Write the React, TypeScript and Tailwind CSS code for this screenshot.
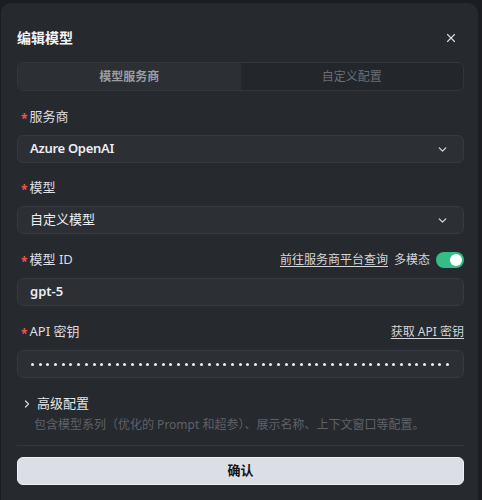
import { X, ChevronDown, ChevronRight } from "lucide-react";

const font = { fontFamily: '"Noto Sans", "Noto Sans CJK SC", sans-serif' };

const Label = ({ text }: { text: string }) => (
	<span className="flex items-center text-[13px] text-[#dcdee2]">
		<span className="text-[#f0564e] text-[12px] font-bold ml-[4px] mr-[2px] mt-[4px]">*</span>
		{text}
	</span>
);

const Select = ({ value, bold }: { value: string; bold?: boolean }) => (
	<div className="h-7 flex items-center justify-between rounded-md border border-[#363a40] bg-[#2c2f34] pl-[12px] pr-[14px]">
		<span className={`text-[13px] text-[#eceef1] ${bold ? "font-semibold tracking-[-0.3px]" : ""}`}>{value}</span>
		<ChevronDown size={13} strokeWidth={2.5} className="text-[#d4d6da]" />
	</div>
);

export default function App() {
	return (
		<div className="w-[482px] h-[500px] bg-[#1b1d20] overflow-hidden" style={font}>
			<div className="ml-[1px] mt-[3px] w-[477px] h-[497px] rounded-t-[10px] bg-[#26292d] pl-4 pr-[14px]">
				<div className="flex items-center justify-between pt-[19px] h-[50px]">
					<span className="text-[14px] font-bold text-[#f2f3f5]">编辑模型</span>
					<X size={14} strokeWidth={2} className="text-[#d8dade] mr-[6px]" />
				</div>
				<div className="mt-[9px] h-[29px] flex rounded-md border border-[#33363b] bg-[#23262a] overflow-hidden">
					<div className="flex-1 flex items-center justify-center bg-[#2c2f33] text-[12px] font-bold text-[#9a9da3]">
						模型服务商
					</div>
					<div className="flex-1 flex items-center justify-center text-[12px] text-[#6b6e74]">
						自定义配置
					</div>
				</div>

				<div className="mt-[16px] flex flex-col">
					<div className="h-5 flex items-center">
						<Label text="服务商" />
					</div>
					<div className="mt-[8px]">
						<Select value="Azure OpenAI" bold />
					</div>

					<div className="mt-[15px] h-5 flex items-center">
						<Label text="模型" />
					</div>
					<div className="mt-[8px]">
						<Select value="自定义模型" />
					</div>

					<div className="mt-[16px] h-5 flex items-center justify-between">
						<Label text="模型 ID" />
						<div className="flex items-center gap-[6px]">
							<span className="text-[12px] text-[#d4d6da] underline underline-offset-2">前往服务商平台查询</span>
							<span className="text-[12px] text-[#d4d6da]">多模态</span>
							<div className="w-[28px] h-[16px] rounded-full bg-[#35bd87] flex items-center justify-end pr-[2px]">
								<div className="w-[12px] h-[12px] rounded-full bg-white" />
							</div>
						</div>
					</div>
					<div className="mt-[8px] h-7 flex items-center rounded-md border border-[#363a40] bg-[#2c2f34] pl-[12px]">
						<span className="text-[13px] font-semibold text-[#eceef1]">gpt-5</span>
					</div>

					<div className="mt-[16px] h-5 flex items-center justify-between">
						<Label text="API 密钥" />
						<span className="text-[12px] text-[#d4d6da] underline underline-offset-2">获取 API 密钥</span>
					</div>
					<div className="mt-[8px] h-7 flex items-center rounded-md border border-[#363a40] bg-[#2c2f34] pl-[13px] pr-[10px] overflow-hidden">
						<div className="flex gap-[4.7px] overflow-hidden">
							{Array.from({ length: 56 }).map((_, i) => (
								<div key={i} className="w-[3px] h-[3px] shrink-0 rounded-full bg-[#eceef1]" />
							))}
						</div>
					</div>
				</div>

				<div className="mt-[16px] flex items-center h-5">
					<ChevronRight size={12} strokeWidth={2.5} className="text-[#d4d6da] ml-[4px]" />
					<span className="ml-[4px] text-[13px] text-[#e4e6e9]">高级配置</span>
				</div>
				<div className="mt-[2px] pl-[17px] text-[12px] text-[#5f6268]">
					包含模型系列（优化的 Prompt 和超参）、展示名称、上下文窗口等配置。
				</div>
				<div className="mt-[11px] h-px bg-[#34373c]" />
				<button className="mt-[11px] w-full h-[28px] rounded-md bg-[#dcdee5] border border-[#eef0f4] text-[13px] font-bold text-[#111]">
					确认
				</button>
			</div>
		</div>
	);
}
